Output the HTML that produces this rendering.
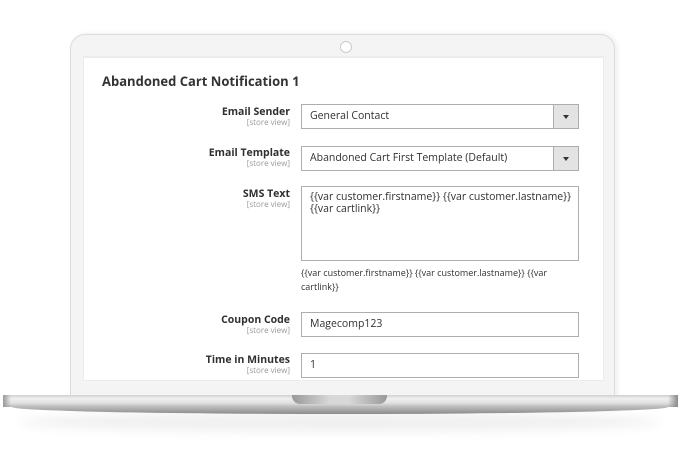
<!DOCTYPE html><html><head><style>
*{margin:0;padding:0;box-sizing:border-box}
body{width:680px;height:450px;background:#fff;position:relative;overflow:hidden;font-family:"Open Sans","Liberation Sans",sans-serif;color:#303030}
.lid{position:absolute;left:70px;top:34px;width:545px;height:375px;border-radius:15px 15px 0 0;background:#f4f4f4;border:1px solid #dcdcdc;box-shadow:2px 0 6px rgba(0,0,0,.08)}
.cam{position:absolute;left:340px;top:41px;width:12px;height:12px;border-radius:50%;background:#fff;border:1px solid #ccc}
.scr{position:absolute;left:83px;top:56px;width:521px;height:325px;background:#fff;border-top:2px solid #ececec;border-left:1px solid #ececec;border-right:1px solid #ececec;border-bottom:1px solid #ececec}
.t{position:absolute;left:102px;top:72px;font-size:13px;font-weight:bold;color:#333}
.l{position:absolute;right:390px;text-align:right;font-size:10.5px;font-weight:bold;color:#303030;line-height:12px}
.l small{display:block;font-weight:normal;font-size:8px;color:#999;line-height:10px}
.f{position:absolute;left:301px;width:278px;border:1px solid #adadad;background:#fff;font-size:10.5px;padding-left:8px;color:#303030;white-space:nowrap}
.f.s{height:25px;line-height:23px}
.ar{position:absolute;right:0;top:0;width:25px;height:23px;background:#e3e3e3;border-left:1px solid #adadad}
.ar:after{content:"";position:absolute;left:9px;top:10px;border:3px solid transparent;border-top:4px solid #333}
.h{position:absolute;left:301px;top:266px;width:275px;font-size:9px;line-height:14px;color:#303030}
.base{position:absolute;left:3px;top:395px;width:675px;height:12px;border-radius:3px 3px 0 0;background:linear-gradient(#cfcfcf,#f0f0f0 30%,#dedede 70%,#b8b8b8);}
.base:before{content:"";position:absolute;left:0;top:0;width:8px;height:12px;background:linear-gradient(90deg,#999,transparent)}
.base:after{content:"";position:absolute;right:0;top:0;width:10px;height:12px;background:linear-gradient(270deg,#888,transparent)}
.under{position:absolute;left:12px;top:407px;width:656px;height:7px;border-radius:0 0 50% 50%/0 0 100% 100%;background:linear-gradient(#bbb,#8a8a8a)}
.shadow{position:absolute;left:20px;top:412px;width:640px;height:20px;border-radius:50%;background:rgba(0,0,0,.06);filter:blur(5px)}
.notch{position:absolute;left:292px;top:395px;width:95px;height:9px;border-radius:0 0 8px 8px;background:linear-gradient(90deg,#999,#d8d8d8 40%,#d8d8d8 60%,#999)}
</style></head><body>
<div class="shadow"></div>
<div class="lid"></div>
<div class="cam"></div>
<div class="scr"></div>
<div class="t">Abandoned Cart Notification 1</div>
<div class="l" style="top:106px">Email Sender<small>[store view]</small></div>
<div class="f s" style="top:104px">General Contact<div class="ar"></div></div>
<div class="l" style="top:147px">Email Template<small>[store view]</small></div>
<div class="f s" style="top:146px">Abandoned Cart First Template (Default)<div class="ar"></div></div>
<div class="l" style="top:188px">SMS Text<small>[store view]</small></div>
<div class="f" style="top:186px;height:75px;padding-top:4px;line-height:12px">{{var customer.firstname}} {{var customer.lastname}}<br>{{var cartlink}}</div>
<div class="h">{{var customer.firstname}} {{var customer.lastname}} {{var cartlink}}</div>
<div class="l" style="top:314px">Coupon Code<small>[store view]</small></div>
<div class="f s" style="top:312px">Magecomp123</div>
<div class="l" style="top:354px">Time in Minutes<small>[store view]</small></div>
<div class="f s" style="top:353px">1</div>
<div class="base"></div>
<div class="under"></div>
<div class="notch"></div>
</body></html>
